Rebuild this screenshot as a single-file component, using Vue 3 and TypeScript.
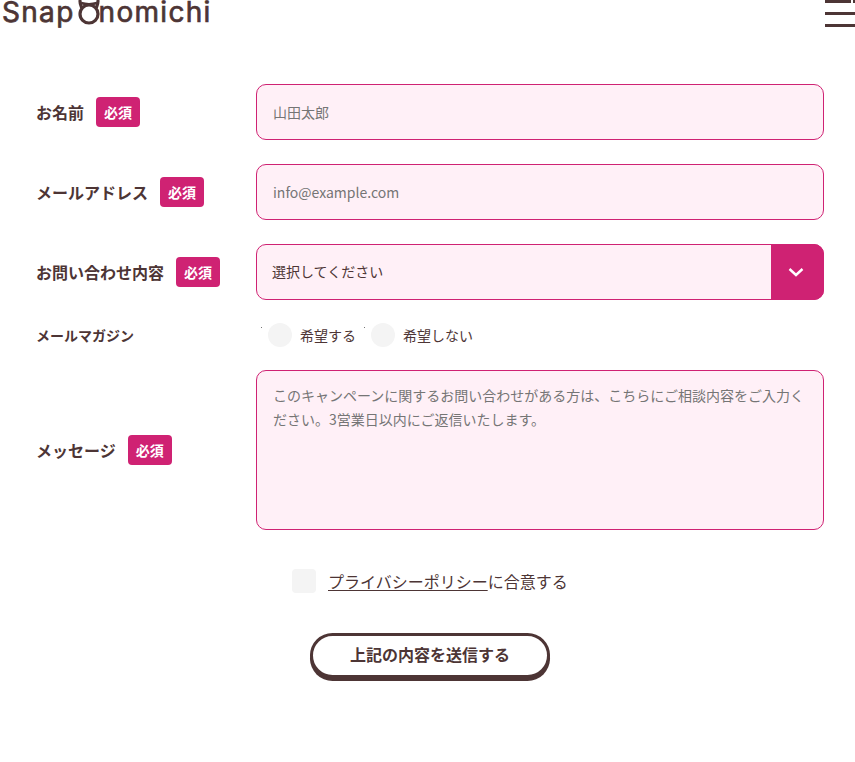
<script setup lang="ts">
interface Field { label: string; placeholder: string }
const inputs: Field[] = [
  { label: 'お名前', placeholder: '山田太郎' },
  { label: 'メールアドレス', placeholder: 'info@example.com' },
]
const message = 'このキャンペーンに関するお問い合わせがある方は、こちらにご相談内容をご入力ください。3営業日以内にご返信いたします。'
</script>

<template>
  <div class="page">
    <header class="header">
      <div class="logo">
        <span class="snap">Snap</span>
        <svg class="cat" width="24" height="25" viewBox="0 0 24 25" aria-hidden="true">
          <path d="M3 1 Q3 4 4.4 7 M21 1 Q21 4 19.6 7" fill="none" stroke="#4d3535" stroke-width="3.2" stroke-linecap="round" />
          <path d="M4 3 Q12 5.4 20 3" fill="none" stroke="#4d3535" stroke-width="2.6" />
          <circle cx="12" cy="14" r="9" fill="none" stroke="#4d3535" stroke-width="3.2" />
        </svg>
        <span>nomichi</span>
      </div>
      <div class="burger" aria-label="menu">
        <i class="bar bar-top"><b></b></i>
        <i class="bar"></i>
        <i class="bar"></i>
      </div>
    </header>

    <form class="form" @submit.prevent>
      <div v-for="f in inputs" :key="f.label" class="row">
        <div class="label"><span>{{ f.label }}</span><em class="req">必須</em></div>
        <input class="control text" type="text" :placeholder="f.placeholder" />
      </div>

      <div class="row">
        <div class="label"><span>お問い合わせ内容</span><em class="req">必須</em></div>
        <div class="control select">
          <span class="select-text">選択してください</span>
          <span class="select-btn">
            <svg width="16" height="10" viewBox="0 0 16 10" aria-hidden="true">
              <path d="M1.5 2 L8 8 L14.5 2" fill="none" stroke="#fff" stroke-width="2.4" />
            </svg>
          </span>
        </div>
      </div>

      <div class="row row-radio">
        <div class="label small"><span>メールマガジン</span></div>
        <div class="radios">
          <label class="radio"><i class="dot"></i><i class="circle"></i><span>希望する</span></label>
          <label class="radio"><i class="dot"></i><i class="circle"></i><span>希望しない</span></label>
        </div>
      </div>

      <div class="row row-message">
        <div class="label"><span>メッセージ</span><em class="req">必須</em></div>
        <textarea class="control area" :placeholder="message"></textarea>
      </div>

      <div class="agree">
        <i class="check"></i>
        <span class="agree-text"><a href="#" @click.prevent>プライバシーポリシー</a>に合意する</span>
      </div>

      <div class="submit-wrap">
        <button class="submit" type="submit">上記の内容を送信する</button>
      </div>
    </form>
  </div>
</template>

<style>
html, body { margin: 0; background: #fff; overflow: hidden; }
</style>

<style scoped>
.page {
  width: 855px;
  height: 762px;
  overflow: hidden;
  color: #4d3535;
  font-family: "Noto Sans CJK JP", "Noto Sans", sans-serif;
}
.header {
  height: 84px;
  display: flex;
  justify-content: space-between;
  align-items: flex-start;
  padding-left: 2px;
  box-sizing: border-box;
}
.logo {
  display: flex;
  align-items: flex-start;
  height: 25px;
  font-family: "Inter", "Noto Sans", sans-serif;
  font-size: 28px;
  font-weight: 400;
  line-height: 24px;
  letter-spacing: 1.3px;
  -webkit-text-stroke: 0.7px #4d3535;
  color: #4d3535;
  white-space: nowrap;
}
.logo span { display: block; }
.snap { letter-spacing: 1.3px; }
.cat { margin-left: 2px; margin-right: -2px; flex: none; }
.burger {
  width: 30px;
  display: flex;
  flex-direction: column;
  gap: 9px;
}
.bar {
  display: block;
  height: 3px;
  background: #4d3535;
  position: relative;
}
.bar-top b {
  position: absolute;
  right: 2px;
  top: 0;
  width: 2px;
  height: 3px;
  background: #fff;
}
.form { display: block; padding: 0 31px 0 36px; }
.row {
  display: flex;
  align-items: center;
  margin-bottom: 24px;
}
.label {
  width: 220px;
  flex: none;
  display: flex;
  align-items: center;
  font-size: 16px;
  font-weight: 700;
  color: #4d3535;
}
.label.small { font-size: 14px; }
.req {
  margin-left: 12px;
  width: 44px;
  height: 30px;
  border-radius: 4px;
  background: #cf2273;
  color: #fff;
  font-style: normal;
  font-size: 14px;
  font-weight: 700;
  display: flex;
  align-items: center;
  justify-content: center;
}
.control {
  box-sizing: border-box;
  width: 568px;
  border: 1px solid #cf2273;
  border-radius: 10px;
  background: #fff0f7;
  font-family: "Noto Sans CJK JP", "Noto Sans", sans-serif;
  outline: none;
}
.text {
  height: 56px;
  padding: 0 16px;
  font-size: 14px;
}
.text::placeholder, .area::placeholder { color: #757575; opacity: 1; }
.select {
  height: 56px;
  display: flex;
  align-items: center;
  justify-content: space-between;
  font-size: 14px;
}
.select-text { padding: 0 0 2px 15px; color: #4d3535; }
.select-btn {
  box-sizing: border-box;
  width: 53px;
  height: 56px;
  flex: none;
  margin-right: -1px;
  padding-right: 3px;
  border-radius: 0 10px 10px 0;
  background: #cf2273;
  display: flex;
  align-items: center;
  justify-content: center;
}
.row-radio { height: 24px; margin-top: -1px; margin-bottom: 23px; }
.radios { display: flex; align-items: center; padding-left: 4px; }
.radio {
  position: relative;
  display: flex;
  align-items: center;
  font-size: 14px;
  margin-right: 7px;
  line-height: 24px;
}
.dot {
  position: absolute;
  left: 1px;
  top: 4px;
  width: 1px;
  height: 1px;
  background: #777;
}
.circle {
  width: 24px;
  height: 24px;
  border-radius: 50%;
  background: #f4f4f4;
  margin-left: 8px;
  margin-right: 8px;
}
.row-message { margin-bottom: 39px; }
.area {
  display: block;
  height: 160px;
  padding: 12px 16px;
  font-size: 14px;
  line-height: 24px;
  resize: none;
}
.agree {
  display: flex;
  align-items: center;
  height: 24px;
  padding-left: 256px;
  font-size: 16px;
}
.check {
  width: 24px;
  height: 24px;
  border-radius: 4px;
  background: #f4f4f4;
  margin-right: 12px;
}
.agree-text a { color: #4d3535; text-decoration: underline; text-underline-offset: 2px; }
.submit-wrap {
  margin-top: 40px;
  padding-left: 274px;
}
.submit {
  box-sizing: border-box;
  width: 240px;
  height: 45px;
  border: 3px solid #4d3535;
  border-radius: 23px;
  box-shadow: 0 3px 0 #4d3535;
  background: #fff;
  color: #4d3535;
  font-family: "Noto Sans CJK JP", "Noto Sans", sans-serif;
  font-size: 16px;
  font-weight: 700;
  padding: 0 0 4px;
}
</style>
